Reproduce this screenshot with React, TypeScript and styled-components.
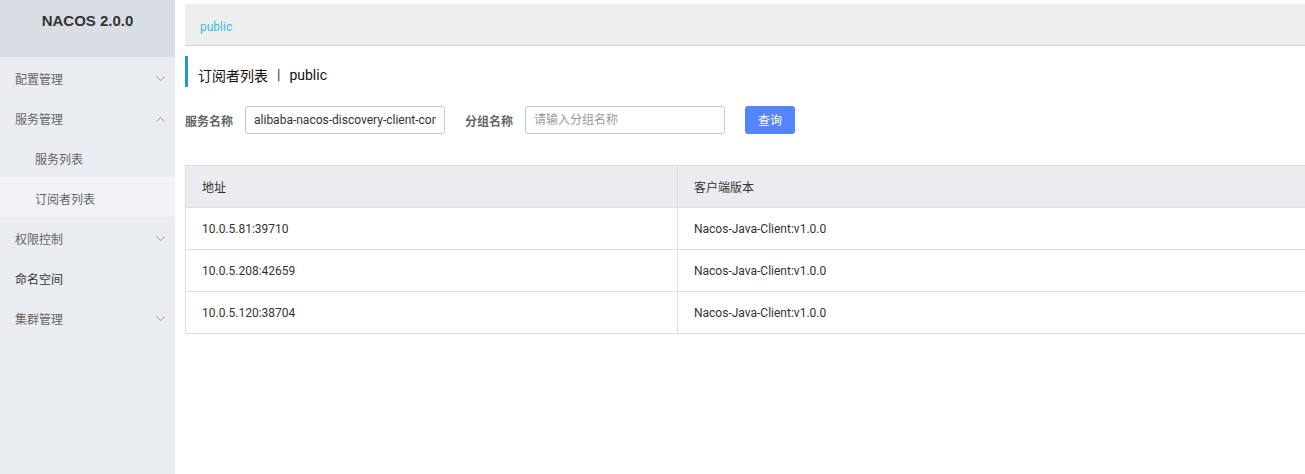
import React from "react";
import styled, { createGlobalStyle } from "styled-components";

const Global = createGlobalStyle`
  html, body { margin: 0; padding: 0; background: #fff; overflow: hidden; }
  body { font-family: Roboto, "Noto Sans CJK SC", sans-serif; font-size: 12px; color: #333; }
  * { box-sizing: border-box; }
`;

const Layout = styled.div`
  display: flex;
  width: 1330px;
  height: 474px;
`;

const Sidebar = styled.aside`
  width: 175px;
  flex: none;
  background: #e9edf2;
  display: flex;
  flex-direction: column;
`;

const Logo = styled.div`
  height: 57px;
  background: #d9dee5;
  padding-top: 13px;
  text-align: center;
  font-family: "Liberation Sans", Arial, sans-serif;
  font-weight: bold;
  font-size: 15px;
  color: #333;
  line-height: 16px;
`;

const MenuItem = styled.div<{ $sub?: boolean; $active?: boolean; $dark?: boolean }>`
  height: 40px;
  display: flex;
  align-items: center;
  justify-content: space-between;
  padding: 3px 10px 0 ${(p) => (p.$sub ? 35 : 15)}px;
  font-size: 12px;
  color: ${(p) => (p.$dark ? "#333" : "#666")};
  background: ${(p) => (p.$active ? "#f2f3f7" : "transparent")};
`;

const Main = styled.main`
  flex: 1;
  padding: 4px 0 0 10px;
  display: flex;
  flex-direction: column;
`;

const Breadcrumb = styled.div`
  height: 42px;
  background: #eeeeee;
  border-bottom: 1px solid #cfcfcf;
  padding: 5px 15px 0;
  display: flex;
  align-items: center;
  font-size: 12px;
  color: #2fc0e4;
`;

const Title = styled.div`
  margin-top: 10px;
  height: 31px;
  border-left: 3px solid #209bd1;
  padding: 6px 0 0 10px;
  display: flex;
  align-items: center;
  font-size: 14px;
  color: #111;
`;

const Sep = styled.span`
  margin: 0 9px;
  color: #333;
`;

const Form = styled.div`
  margin-top: 19px;
  display: flex;
  align-items: center;
  height: 28px;
`;

const Label = styled.label`
  font-size: 12px;
  font-weight: bold;
  color: #666;
  margin-right: 12px;
`;

const Input = styled.input`
  width: 200px;
  height: 28px;
  border: 1px solid #c4c6cf;
  border-radius: 3px;
  padding: 0 8px;
  font-family: Roboto, "Noto Sans CJK SC", sans-serif;
  font-size: 12px;
  color: #333;
  outline: none;
  margin-right: 20px;
  &::placeholder { color: #999; }
`;

const Button = styled.button`
  width: 50px;
  height: 28px;
  border: none;
  border-radius: 3px;
  background: #5584ff;
  color: #fff;
  font-family: Roboto, "Noto Sans CJK SC", sans-serif;
  font-size: 12px;
  padding: 0 0 2px;
`;

const Table = styled.table`
  margin-top: 31px;
  width: 1130px;
  border-collapse: collapse;
  border: 1px solid #dcdee3;
  table-layout: fixed;
`;

const Th = styled.th`
  height: 42px;
  background: #ebecf0;
  border: 1px solid #dcdee3;
  text-align: left;
  font-weight: normal;
  font-size: 12px;
  color: #333;
  padding: 0 16px;
`;

const Td = styled.td`
  height: 42px;
  border: 1px solid #dcdee3;
  font-size: 12px;
  color: #333;
  padding: 0 16px;
`;

const Chevron = ({ up }: { up?: boolean }) => (
  <svg width="9" height="6" viewBox="0 0 9 6" fill="none" stroke="#999" strokeWidth="1">
    {up ? <path d="M0.5 5.5 L4.5 1.5 L8.5 5.5" /> : <path d="M0.5 0.5 L4.5 4.5 L8.5 0.5" />}
  </svg>
);

const rows = [
  ["10.0.5.81:39710", "Nacos-Java-Client:v1.0.0"],
  ["10.0.5.208:42659", "Nacos-Java-Client:v1.0.0"],
  ["10.0.5.120:38704", "Nacos-Java-Client:v1.0.0"],
];

export default function App() {
  return (
    <>
      <Global />
      <Layout>
        <Sidebar>
          <Logo>NACOS 2.0.0</Logo>
          <MenuItem>配置管理<Chevron /></MenuItem>
          <MenuItem>服务管理<Chevron up /></MenuItem>
          <MenuItem $sub>服务列表</MenuItem>
          <MenuItem $sub $active>订阅者列表</MenuItem>
          <MenuItem>权限控制<Chevron /></MenuItem>
          <MenuItem $dark>命名空间</MenuItem>
          <MenuItem>集群管理<Chevron /></MenuItem>
        </Sidebar>
        <Main>
          <Breadcrumb>public</Breadcrumb>
          <Title>
            订阅者列表<Sep>|</Sep>public
          </Title>
          <Form>
            <Label>服务名称</Label>
            <Input defaultValue="alibaba-nacos-discovery-client-common" />
            <Label>分组名称</Label>
            <Input placeholder="请输入分组名称" />
            <Button>查询</Button>
          </Form>
          <Table>
            <colgroup>
              <col style={{ width: 492 }} />
              <col />
            </colgroup>
            <thead>
              <tr>
                <Th>地址</Th>
                <Th>客户端版本</Th>
              </tr>
            </thead>
            <tbody>
              {rows.map((r) => (
                <tr key={r[0]}>
                  <Td>{r[0]}</Td>
                  <Td>{r[1]}</Td>
                </tr>
              ))}
            </tbody>
          </Table>
        </Main>
      </Layout>
    </>
  );
}
